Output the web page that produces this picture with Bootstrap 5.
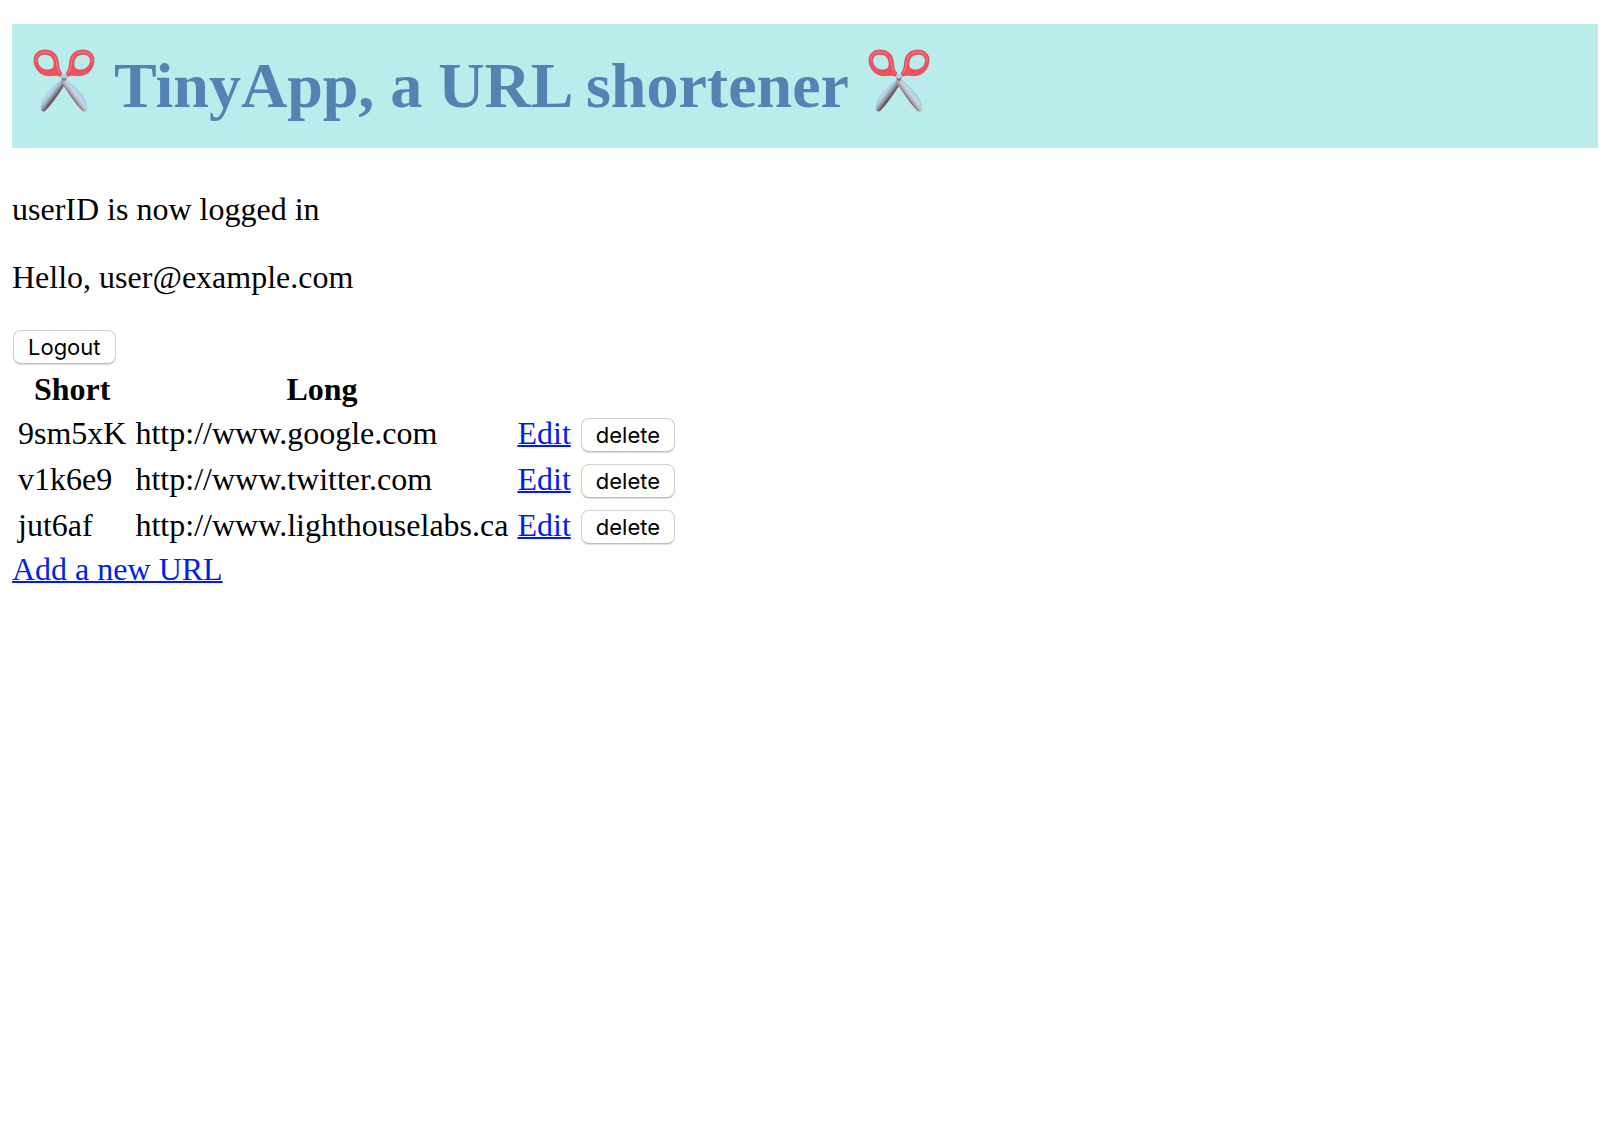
<!DOCTYPE html>
<html lang="en">
<head>
<meta charset="utf-8">
<meta name="viewport" content="width=device-width, initial-scale=1">
<title>TinyApp</title>
<link href="https://cdn.jsdelivr.net/npm/bootstrap@5.3.0/dist/css/bootstrap.min.css" rel="stylesheet">
<style>
body { font-family: "Liberation Serif", "Times New Roman", serif; font-size: 32px; line-height: 36px; color: #000; background: #fff; }
.page { padding: 24px 10px 24px 12px; }
.banner { background: #baecec; padding: 20px; margin-bottom: 43px; }
.banner h1 { color: #5383b3; font-size: 64px; line-height: 84px; gap: 18px; }
.scissors { width: 64px; height: 64px; flex: none; margin-bottom: 12px; }
.page p { margin-bottom: 32px; }
.page a { color: #001ee6; text-decoration-thickness: 2px; }
.logout { padding: 3px 1px 1px; }
.btn-mac { --bs-btn-font-size: 22px; --bs-btn-line-height: 32px; --bs-btn-padding-y: 0; --bs-btn-padding-x: 14px; --bs-btn-color: #000; --bs-btn-bg: #fff; --bs-btn-border-color: #d2d2d2; --bs-btn-border-radius: 8px; --bs-btn-hover-bg: #f4f4f4; --bs-btn-hover-border-color: #bbb; font-family: Inter, sans-serif; border-bottom-color: #bdbdbd; box-shadow: 0 1px 1px #ddd; }
.urls { border-collapse: separate; border-spacing: 4px; }
.urls th, .urls td { padding: 2px 3px 2px 2px; }
.urls tbody td { height: 42px; padding-bottom: 4px; }
.urls th { text-align: center; }
.urls tbody .act { padding: 5px 3px 3px; }
</style>
<script src="https://cdn.jsdelivr.net/npm/bootstrap@5.3.0/dist/js/bootstrap.bundle.min.js" defer></script>
</head>
<body>
<svg width="0" height="0" class="d-block" aria-hidden="true">
  <defs>
    <linearGradient id="bladeL" x1="62" y1="145" x2="92" y2="168" gradientUnits="userSpaceOnUse">
      <stop offset="0" stop-color="#8fa5b4"/><stop offset=".2" stop-color="#dcebf8"/><stop offset=".6" stop-color="#a9c8e4"/><stop offset=".85" stop-color="#8b8991"/><stop offset="1" stop-color="#655159"/>
    </linearGradient>
    <linearGradient id="bladeR" x1="138" y1="170" x2="170" y2="146" gradientUnits="userSpaceOnUse">
      <stop offset="0" stop-color="#69545b"/><stop offset=".15" stop-color="#b3a5ac"/><stop offset=".4" stop-color="#c6d6e6"/><stop offset=".8" stop-color="#a4cceb"/><stop offset="1" stop-color="#8093a3"/>
    </linearGradient>
    <symbol id="scissors" viewBox="21 24 192 192">
      <path d="M122 114C106 122 80 142 63 165C53 180 48 196 48 207Q50 217 60 213C76 198 98 169 125 124Z" fill="url(#bladeL)" stroke="#8798a4" stroke-width="1"/>
      <path d="M112 114C128 121 154 144 171 166C181 182 186 199 186 209Q182 217 173 213C156 196 135 167 109 126Z" fill="url(#bladeR)" stroke="#8798a4" stroke-width="1"/>
      <g id="handle">
        <path fill-rule="evenodd" d="M27 62C26 43 39 30 60 30C82 30 96 42 99 60C102 76 101 90 111 99L106 109C95 103 86 107 70 107C45 106 28 85 27 62ZM38 62C38 76 51 90 68 90C84 90 89 80 87 67C84 51 74 43 60 43C46 43 38 51 38 62Z" fill="#f34f5c" stroke="#b94855" stroke-width="2"/>
        <path d="M33 65C31 44 44 36 61 36C80 36 91 47 94 64C96 81 98 91 106 100" fill="none" stroke="#ff7e83" stroke-width="3"/>
      </g>
      <use href="#handle" transform="translate(234 0) scale(-1 1)"/>
      <circle cx="117" cy="113" r="8" fill="#8396a5"/>
      <ellipse cx="117" cy="110" rx="6" ry="3" fill="#d9e4ed"/>
      <path d="M112 119Q117 123 122 119" fill="none" stroke="#56606b" stroke-width="3"/>
    </symbol>
  </defs>
</svg>
<div class="page">
  <header class="banner">
    <h1 class="d-flex align-items-center fw-bold mb-0">
      <svg class="scissors" aria-hidden="true"><use href="#scissors"/></svg>
      <span>TinyApp, a URL shortener</span>
      <svg class="scissors" aria-hidden="true"><use href="#scissors"/></svg>
    </h1>
  </header>
  <main>
    <p>userID is now logged in</p>
    <p>Hello, user@example.com</p>
    <form class="logout d-flex"><button type="button" class="btn btn-mac">Logout</button></form>
    <table class="urls">
      <thead><tr><th scope="col">Short</th><th scope="col">Long</th><td></td><td></td></tr></thead>
      <tbody>
        <tr><td>9sm5xK</td><td>http://www.google.com</td><td><a href="#">Edit</a></td><td class="act"><button type="button" class="btn btn-mac d-block">delete</button></td></tr>
        <tr><td>v1k6e9</td><td>http://www.twitter.com</td><td><a href="#">Edit</a></td><td class="act"><button type="button" class="btn btn-mac d-block">delete</button></td></tr>
        <tr><td>jut6af</td><td>http://www.lighthouselabs.ca</td><td><a href="#">Edit</a></td><td class="act"><button type="button" class="btn btn-mac d-block">delete</button></td></tr>
      </tbody>
    </table>
    <a href="#">Add a new URL</a>
  </main>
</div>
</body>
</html>
